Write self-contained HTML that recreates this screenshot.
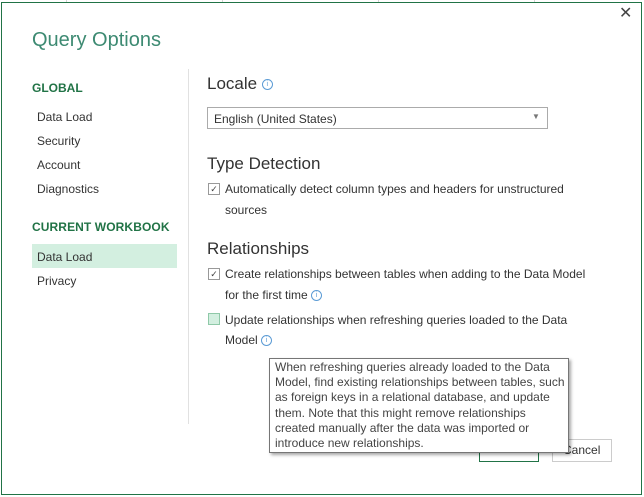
<!DOCTYPE html>
<html><head><style>
body{margin:0;width:644px;height:497px;background:#fff;position:relative;overflow:hidden;font-family:"Liberation Sans",sans-serif;color:#333;}
.a{position:absolute;white-space:nowrap;}
.t{font-size:12px;}
.h{font-size:17px;color:#333;}
.cb{position:absolute;width:10px;height:10px;border:1px solid #999;background:#fff;font-size:9px;line-height:10px;text-align:center;color:#444;}
.i{display:inline-block;width:9px;height:9px;border:1px solid #5b9bd5;border-radius:50%;font-size:7px;line-height:9px;text-align:center;color:#5b9bd5;vertical-align:middle;}
.g{position:absolute;background:#d4d4d4;}
</style></head><body>
<div class="g" style="left:66px;top:0;width:1px;height:3px"></div>
<div class="g" style="left:222px;top:0;width:1px;height:3px"></div>
<div class="g" style="left:378px;top:0;width:1px;height:3px"></div>
<div class="g" style="left:534px;top:0;width:1px;height:3px"></div>
<div style="position:absolute;left:1px;top:2px;width:639px;height:491px;border:1px solid #217346;"></div>
<div class="a" style="left:619px;top:3px;font-size:16px;color:#444">✕</div>
<div class="a" style="left:32px;top:29px;font-size:20px;color:#3d8a72">Query Options</div>
<div class="a" style="left:32px;top:81px;font-size:12px;font-weight:bold;color:#217346">GLOBAL</div>
<div class="a t" style="left:37px;top:110px">Data Load</div>
<div class="a t" style="left:37px;top:134px">Security</div>
<div class="a t" style="left:37px;top:158px">Account</div>
<div class="a t" style="left:37px;top:182px">Diagnostics</div>
<div class="a" style="left:32px;top:220px;font-size:12px;font-weight:bold;color:#217346;letter-spacing:0.1px">CURRENT WORKBOOK</div>
<div style="position:absolute;left:32px;top:244px;width:145px;height:24px;background:#d3efe0"></div>
<div class="a t" style="left:37px;top:250px">Data Load</div>
<div class="a t" style="left:37px;top:274px">Privacy</div>
<div style="position:absolute;left:188px;top:69px;width:1px;height:355px;background:#e1e1e1"></div>
<div class="a h" style="left:207px;top:74px">Locale <span class="i">i</span></div>
<div style="position:absolute;left:207px;top:107px;width:339px;height:20px;border:1px solid #ababab"></div>
<div class="a t" style="left:214px;top:112px">English (United States)</div>
<div class="a" style="left:532px;top:112px;font-size:8px;color:#777">▼</div>
<div class="a h" style="left:207px;top:154px">Type Detection</div>
<div class="cb" style="left:208px;top:183px">✓</div>
<div class="a t" style="left:225px;top:182px">Automatically detect column types and headers for unstructured</div>
<div class="a t" style="left:225px;top:203px">sources</div>
<div class="a h" style="left:207px;top:239px">Relationships</div>
<div class="cb" style="left:208px;top:268px">✓</div>
<div class="a t" style="left:225px;top:267px">Create relationships between tables when adding to the Data Model</div>
<div class="a t" style="left:225px;top:288px">for the first time <span class="i">i</span></div>
<div class="cb" style="left:208px;top:313px;background:#d3efe0;border-color:#8fc9a8"></div>
<div class="a t" style="left:225px;top:313px">Update relationships when refreshing queries loaded to the Data</div>
<div class="a t" style="left:225px;top:333px">Model <span class="i">i</span></div>
<div style="position:absolute;left:479px;top:439px;width:58px;height:21px;border:1px solid #217346"></div>
<div style="position:absolute;left:552px;top:439px;width:58px;height:21px;border:1px solid #ccc"></div>
<div class="a t" style="left:563px;top:443px">Cancel</div>
<div style="position:absolute;left:269px;top:358px;width:298px;height:93px;border:1px solid #767676;background:#fff;box-shadow:2px 2px 3px rgba(0,0,0,.35)"></div>
<div class="a" style="left:275px;top:360px;font-size:12px;line-height:15.2px;color:#444">When refreshing queries already loaded to the Data<br>Model, find existing relationships between tables, such<br>as foreign keys in a relational database, and update<br>them. Note that this might remove relationships<br>created manually after the data was imported or<br>introduce new relationships.</div>
</body></html>
